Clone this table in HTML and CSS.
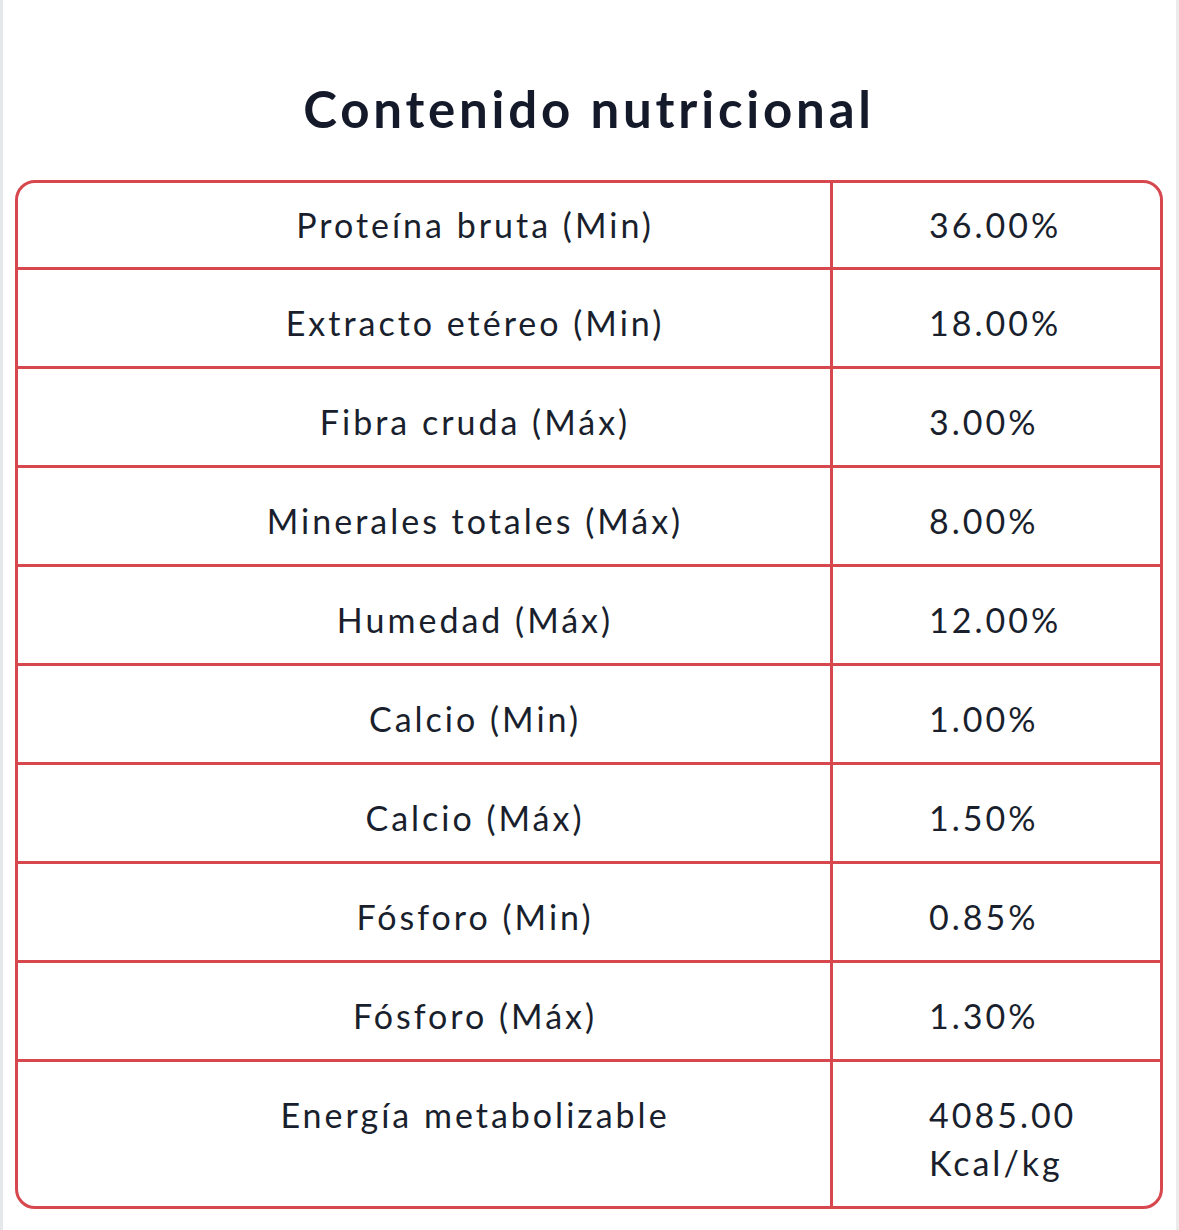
FILE: index.html
```html
<!DOCTYPE html>
<html lang="es">
<head>
<meta charset="utf-8">
<title>Contenido nutricional</title>
<link rel="stylesheet" href="styles.css">
</head>
<body>
<div class="page">
  <h1 class="title">Contenido nutricional</h1>
  <div class="card">
    <div class="row first"><div class="name">Proteína bruta (Min)</div><div class="value">36.00%</div></div>
    <div class="row"><div class="name">Extracto etéreo (Min)</div><div class="value">18.00%</div></div>
    <div class="row"><div class="name">Fibra cruda (Máx)</div><div class="value">3.00%</div></div>
    <div class="row"><div class="name">Minerales totales (Máx)</div><div class="value">8.00%</div></div>
    <div class="row"><div class="name">Humedad (Máx)</div><div class="value">12.00%</div></div>
    <div class="row"><div class="name">Calcio (Min)</div><div class="value">1.00%</div></div>
    <div class="row"><div class="name">Calcio (Máx)</div><div class="value">1.50%</div></div>
    <div class="row"><div class="name">Fósforo (Min)</div><div class="value">0.85%</div></div>
    <div class="row"><div class="name">Fósforo (Máx)</div><div class="value">1.30%</div></div>
    <div class="row last"><div class="name">Energía metabolizable</div><div class="value">4085.00 Kcal/kg</div></div>
  </div>
</div>
</body>
</html>
```

FILE: styles.css
```css
html, body {
  margin: 0;
  padding: 0;
  background: #ffffff;
}

body {
  font-family: "Lato", "Liberation Sans", sans-serif;
  color: #1a1f2d;
}

.page {
  box-sizing: border-box;
  width: 1179px;
  min-height: 1230px;
  border-left: 3px solid #e5e8eb;
  border-right: 3px solid #ebebeb;
  padding: 79px 13px 0 12px;
}

.title {
  margin: 0 0 41px 0;
  font-size: 51px;
  line-height: 60px;
  font-weight: 700;
  text-align: center;
  color: #141a2a;
  letter-spacing: 3.8px;
}

.card {
  width: 1148px;
  box-sizing: border-box;
  border: 3px solid #d6474e;
  border-radius: 20px;
  overflow: hidden;
}

.row {
  display: grid;
  grid-template-columns: 815px 1fr;
  border-top: 3px solid #d6474e;
}

.row.first {
  border-top: none;
}

.name,
.value {
  font-size: 34px;
  line-height: 48px;
  letter-spacing: 3px;
  padding: 29px 20px 19px 0;
}

.name {
  border-right: 3px solid #d6474e;
  padding-left: 102px;
  padding-right: 0;
  text-align: center;
}

.value {
  padding-left: 96px;
  text-align: left;
}

.row.first .name,
.row.first .value {
  padding-top: 18px;
  padding-bottom: 18px;
}
```
